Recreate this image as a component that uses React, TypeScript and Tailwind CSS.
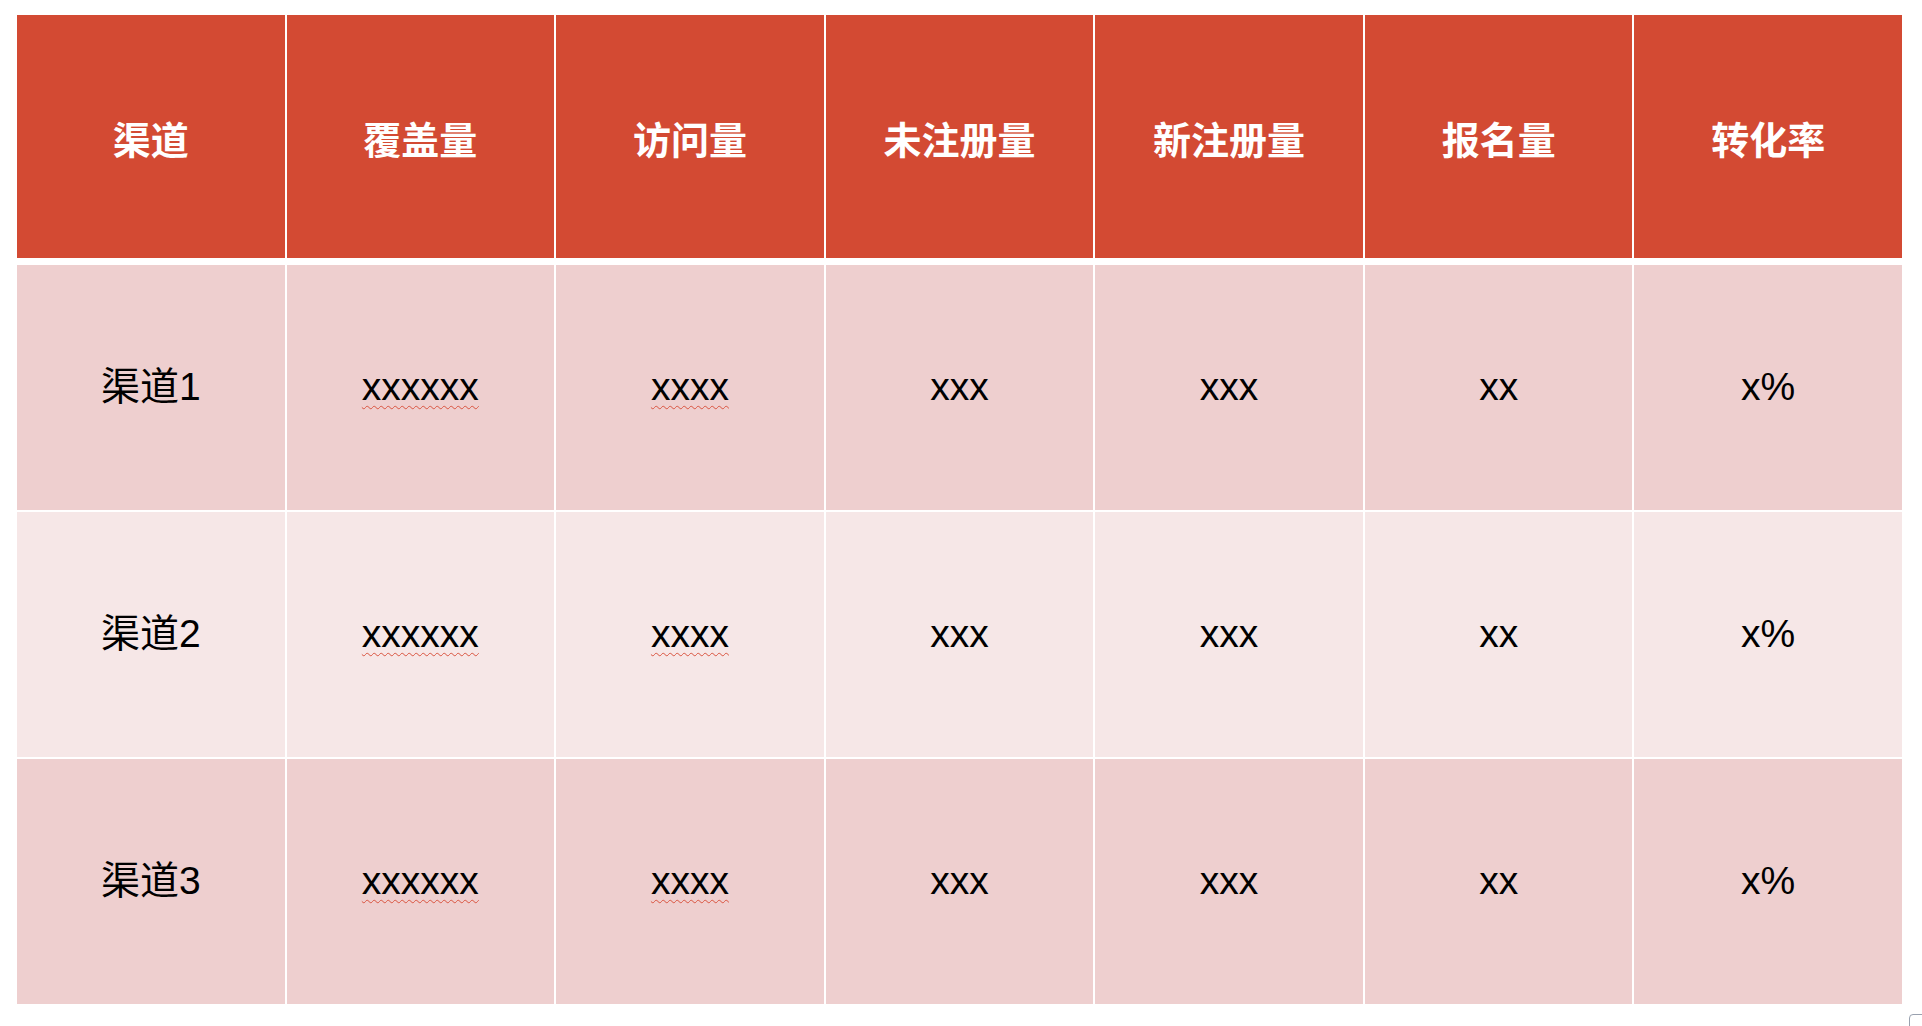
import React from "react";

const HEADERS = ["渠道", "覆盖量", "访问量", "未注册量", "新注册量", "报名量", "转化率"];

// rows of the channel table; the first two values get the spellcheck squiggle
const ROWS = [
  { name: "渠道1", values: ["xxxxxx", "xxxx", "xxx", "xxx", "xx", "x%"] },
  { name: "渠道2", values: ["xxxxxx", "xxxx", "xxx", "xxx", "xx", "x%"] },
  { name: "渠道3", values: ["xxxxxx", "xxxx", "xxx", "xxx", "xx", "x%"] },
];

const FONT = {
  fontFamily: '"Liberation Sans", "Noto Sans CJK SC", sans-serif',
};

function Cell({ children, tone }: { children: React.ReactNode; tone: string }) {
  return (
    <div className={`flex items-center justify-center h-[245px] ${tone}`}>
      {children}
    </div>
  );
}

export default function App() {
  return (
    <div className="relative w-[1922px] h-[1026px] bg-white overflow-hidden" style={FONT}>
      <div className="ml-[17px] pt-[15px] w-[1885px]">
        {/* header */}
        <div className="grid grid-cols-7 gap-x-[2px]">
          {HEADERS.map((h) => (
            <div
              key={h}
              className="flex items-center justify-center h-[243px] bg-[#d34a33] text-white text-[38px] font-bold pt-[2px]"
              style={{ fontFamily: '"Noto Sans CJK SC", sans-serif' }}
            >
              {h}
            </div>
          ))}
        </div>

        {/* body */}
        <div className="mt-[7px] flex flex-col gap-y-[2px]">
          {ROWS.map((row, ri) => {
            const tone = ri % 2 === 1 ? "bg-[#f6e7e7]" : "bg-[#eecfcf]";
            return (
              <div key={row.name} className="grid grid-cols-7 gap-x-[2px]">
                <Cell tone={tone}>
                  <span className="text-[39px] text-black">{row.name}</span>
                </Cell>
                {row.values.map((v, vi) => (
                  <Cell key={vi} tone={tone}>
                    <span
                      className={
                        vi < 2
                          ? "text-[39px] text-black underline decoration-wavy decoration-[#d9533f] decoration-1 underline-offset-[5px]"
                          : "text-[39px] text-black"
                      }
                    >
                      {v}
                    </span>
                  </Cell>
                ))}
              </div>
            );
          })}
        </div>
      </div>

      {/* cut-off widget in the bottom corner */}
      <div className="absolute left-[1909px] top-[1014px] w-[18px] h-[18px] rounded-[4px] border border-gray-400 bg-white" />
    </div>
  );
}
